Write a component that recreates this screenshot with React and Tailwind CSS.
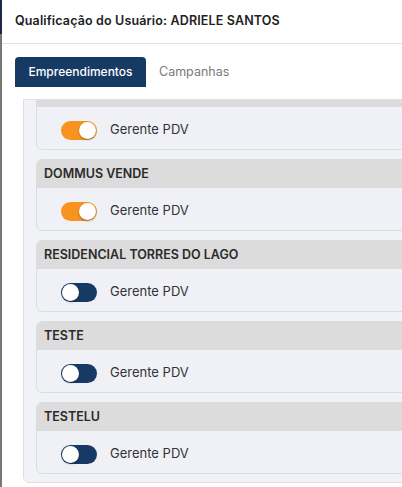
const items = [
  { name: "", on: true, partial: true },
  { name: "DOMMUS VENDE", on: true },
  { name: "RESIDENCIAL TORRES DO LAGO", on: false },
  { name: "TESTE", on: false },
  { name: "TESTELU", on: false },
]

function Toggle({ on }) {
  return (
    <div
      className={
        "w-[36px] h-[19px] rounded-full flex items-center px-[1px] " +
        (on ? "bg-[#f7931e] justify-end" : "bg-[#173a64] justify-start")
      }
    >
      <div className="w-[17px] h-[17px] rounded-full bg-white shadow-[0_1px_2px_rgba(0,0,0,0.35)]" />
    </div>
  )
}

export default function App() {
  return (
    <div
      className="w-[402px] h-[487px] overflow-hidden flex bg-[#6b6b6b]"
      style={{ fontFamily: "Inter, 'Noto Sans', sans-serif" }}
    >
      <div className="w-[2px] shrink-0 flex flex-col">
        <div className="h-[34px] bg-[#1d2a44]" />
        <div className="flex-1 bg-[#777]" />
      </div>
      <div className="flex-1 min-w-0 bg-white flex flex-col overflow-hidden">
        <div className="h-[44px] border-b border-[#e3e3e6] flex items-center pl-[13px] shrink-0">
          <span className="text-[12.5px] font-semibold text-[#222] whitespace-nowrap tracking-[0.15px]">
            Qualificação do Usuário: ADRIELE SANTOS
          </span>
        </div>
        <div className="flex items-end pl-[13px] mt-[13px] shrink-0">
          <div className="w-[131px] h-[30px] rounded-t-[4px] bg-[#173a64] flex items-center justify-center">
            <span className="text-[12px] font-medium text-white">Empreendimentos</span>
          </div>
          <div className="ml-[13px] h-[30px] flex items-center">
            <span className="text-[12.5px] text-[#7a7a7a]">Campanhas</span>
          </div>
        </div>
        <div className="mt-[12px] ml-[21px] w-[600px] h-[384px] shrink-0 border border-[#dedee3] rounded-bl-[6px] bg-[#f1f2f6] overflow-hidden pl-[12px]">
          <div className="-mt-[22px] flex flex-col gap-[9px]">
            {items.map((item, i) => (
              <div key={i} className="rounded-[6px] border border-[#dcdce0] bg-[#f0f1f6] overflow-hidden">
                <div className="h-[28px] bg-[#dcdcdc] flex items-center pl-[7px]">
                  <span className="text-[12.5px] font-semibold text-[#2a2a2a] whitespace-nowrap">
                    {item.name}
                  </span>
                </div>
                <div className="h-[42px] flex items-center pl-[24px] pt-[4px]">
                  <Toggle on={item.on} />
                  <span className="ml-[13px] text-[13px] text-[#333]">Gerente PDV</span>
                </div>
              </div>
            ))}
          </div>
        </div>
      </div>
    </div>
  )
}
